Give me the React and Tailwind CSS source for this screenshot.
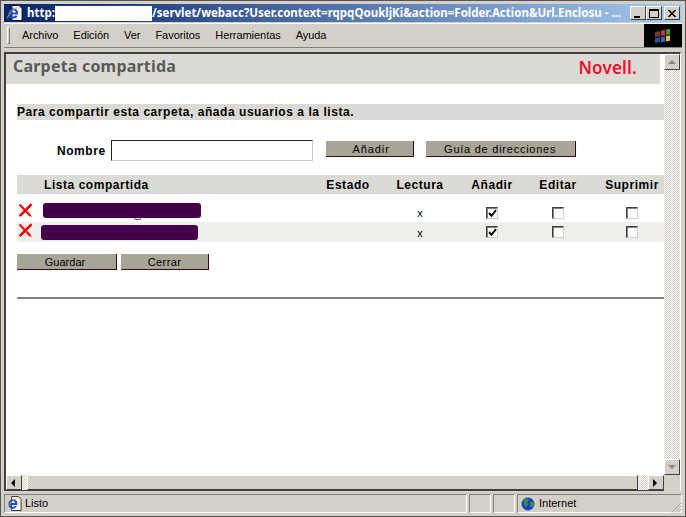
import { Fragment } from 'react';

const COLS = ['Estado', 'Lectura', 'Añadir', 'Editar', 'Suprimir'];
const ROWS = [
  { id: 'a', barClass: 'ml-[26px] mt-[1px] w-[158px]', rowClass: '', cellPad: 'pt-[2px]', mark: true },
  { id: 'b', barClass: 'ml-[24px] mt-[3px] w-[157px]', rowClass: 'bg-[#eeeeea]', cellPad: '', mark: false },
];
const tahoma = "font-['Noto_Sans',sans-serif]";
const arial = "font-['Liberation_Sans',sans-serif]";
const raised = 'border border-t-white border-l-white border-r-[#404040] border-b-[#404040] bg-[#d4d0c8]';
const sunken = 'border border-t-[#808080] border-l-[#808080] border-r-white border-b-white';
const checker = 'bg-[repeating-conic-gradient(#ffffff_0_25%,#d4d0c8_0_50%)] bg-[length:2px_2px]';

function IeIcon({ size = 16 }) {
  return (
    <svg width={size} height={size} viewBox="0 0 16 16" className="shrink-0">
      <path d="M5 0.5h7l3 3v12H5z" fill="#fff" stroke="#000" strokeWidth="0.8" />
      <path d="M2.5 8.5h7.5C10 6 8.6 4.5 6.6 4.5S2.5 6.2 2.5 8.5s1.6 4 4 4c1.4 0 2.6-.6 3.2-1.7" stroke="#1a50d8" strokeWidth="2.2" fill="none" />
      <path d="M0.8 13.5C0 10.5 5 5 10.5 2.5c1.2-.4 1.8.2 1.2 1.2" stroke="#e8b820" strokeWidth="0.9" fill="none" />
    </svg>
  );
}

function WinFlag() {
  return (
    <svg width="18" height="18" viewBox="0 0 18 18">
      <path d="M1 5l5-1v5l-5 1z" fill="#7a3a30" />
      <path d="M1 11l5-1v5l-5 1z" fill="#2f4f8f" />
      <path d="M7 3.5l4-.8v5.5l-4 .8z" fill="#c23a2a" />
      <path d="M12 2.5l4-.8v5.5l-4 .8z" fill="#3f9a3f" />
      <path d="M7 10l4-.8v5.5l-4 .8z" fill="#3a62c8" />
      <path d="M12 9l4-.8v5.5l-4 .8z" fill="#e0c030" />
    </svg>
  );
}

function Globe() {
  return (
    <svg width="14" height="14" viewBox="0 0 14 14" className="shrink-0">
      <circle cx="7" cy="7" r="6.5" fill="#1c3fc4" />
      <path d="M3 2.5l4-1 1 2-2 2 1 2.5-2 2-2-3.5zM9 5l3.5-.5.8 3-2.5 3.5-1.5-2z" fill="#2f9a35" />
    </svg>
  );
}

function WinButton({ children, className = '' }) {
  return (
    <div className={`w-[16px] h-[14px] flex items-center justify-center ${raised} ${className}`}>
      {children}
    </div>
  );
}

function WebButton({ label, className = '' }) {
  return (
    <button className={`h-[16px] pt-[1px] bg-[#a9a498] border-r border-b border-r-[#3a0a0a] border-b-[#3a0a0a] text-[11px] leading-none text-black ${arial} ${className}`}>
      {label}
    </button>
  );
}

function Checkbox({ checked }) {
  return (
    <div className="w-[12px] h-[12px] bg-white border border-t-[#404040] border-l-[#404040] border-r-[#ccc] border-b-[#ccc] shadow-[inset_1px_1px_0_#808080] flex items-center justify-center">
      {checked && (
        <svg width="9" height="9" viewBox="0 0 9 9">
          <path d="M1 4l2.5 2.8L8 1.2" stroke="#000" strokeWidth="1.9" fill="none" />
        </svg>
      )}
    </div>
  );
}

function ScrollArrow({ dir, disabled }) {
  const paths = {
    up: 'M4 1l4 4H0z',
    down: 'M4 5L0 1h8z',
    left: 'M5 0v8L1 4z',
    right: 'M1 0v8l4-4z',
  };
  return (
    <svg width="8" height="8" viewBox="0 0 8 8" className={dir === 'up' || dir === 'down' ? 'mt-[1px]' : ''}>
      <path d={paths[dir]} fill={disabled ? '#888' : '#000'} />
    </svg>
  );
}

export default function App() {
  return (
    <div className={`w-[686px] h-[517px] overflow-hidden bg-[#d4d0c8] border border-[#555] px-[3px] pt-[3px] pb-[3px] flex flex-col ${tahoma}`}>
      {/* title bar */}
      <div className="h-[18px] flex items-center pl-[3px] pr-[2px] bg-gradient-to-r from-[#0a246a] to-[#a6caf0] shrink-0">
        <IeIcon />
        <div className="ml-[4px] flex-1 min-w-0 flex items-center whitespace-nowrap text-white text-[11.5px] font-bold leading-none">
          <span>http:</span>
          <span className="w-[97px] h-[15px] bg-white shrink-0" />
          <span>/servlet/webacc?User.context=rqpqQoukljKi&amp;action=Folder.Action&amp;Url.Enclosu - ...</span>
        </div>
        <div className="flex items-center ml-[4px]">
          <WinButton>
            <div className="w-[6px] h-[2px] bg-black mt-[7px] -ml-[2px]" />
          </WinButton>
          <WinButton>
            <div className="w-[10px] h-[9px] border border-black border-t-2" />
          </WinButton>
          <WinButton className="ml-[2px]">
            <svg width="8" height="7" viewBox="0 0 8 7"><path d="M0.5 0l7 7M7.5 0l-7 7" stroke="#000" strokeWidth="1.5" /></svg>
          </WinButton>
        </div>
      </div>

      {/* menu bar */}
      <div className="h-[25px] mt-[1px] flex items-stretch shrink-0 border-t border-b border-t-white border-b-[#808080]">
        <div className="flex-1 flex items-center pl-[3px]">
          <div className="w-[3px] h-[17px] border border-t-white border-l-white border-r-[#808080] border-b-[#808080]" />
          <nav className={`flex items-center ml-[12px] gap-[15px] text-[11px] tracking-[-0.05px] text-black leading-none pb-[1px] ${arial}`}>
            {['Archivo', 'Edición', 'Ver', 'Favoritos', 'Herramientas', 'Ayuda'].map((item) => (
              <span key={item}>{item}</span>
            ))}
          </nav>
        </div>
        <div className="w-[38px] bg-black flex items-center justify-center">
          <WinFlag />
        </div>
      </div>

      {/* browser frame */}
      <div className="mt-[4px] flex-1 min-h-0 flex flex-col border-t-2 border-l-2 border-t-[#404040] border-l-[#404040] border-r border-r-white mr-[1px]">
        <div className="flex-1 min-h-0 flex">
          {/* page */}
          <main className="flex-1 min-w-0 bg-white overflow-hidden">
            <div className="h-[30px] mr-[4px] bg-[#dcdad5] flex items-start justify-between pl-[7px] pr-[23px]">
              <h1 className="text-[16px] font-bold tracking-[0.2px] text-[#5a5a5a] leading-none mt-[4px]">Carpeta compartida</h1>
              <span className="text-[17px] font-semibold tracking-[0.2px] leading-none text-[#f00e2e] mt-[5px]">Novell.</span>
            </div>

            <div className={`mt-[20px] ml-[11px] h-[16px] bg-[#dcdad5] flex items-center text-[12px] font-bold tracking-[0.55px] text-black leading-none ${arial}`}>
              Para compartir esta carpeta, añada usuarios a la lista.
            </div>

            <div className={`mt-[20px] flex items-center h-[21px] ${arial}`}>
              <label className="ml-[51px] pt-[1px] text-[12px] font-bold tracking-[0.55px] text-black">Nombre</label>
              <input className="ml-[5px] w-[202px] h-[21px] bg-white border border-t-[#222] border-l-[#222] border-r-[#ccc] border-b-[#ccc] outline-none" />
              <WebButton label="Añadir" className="ml-[13px] w-[88px] self-start mt-[1px] pl-[4px] tracking-[0.9px]" />
              <WebButton label="Guía de direcciones" className="ml-[12px] w-[150px] self-start mt-[1px] tracking-[0.75px]" />
            </div>

            <div className={`mt-[14px] ml-[11px] grid grid-cols-[295px_72px_72px_72px_60px_76px] ${arial}`}>
              <div className="h-[19px] bg-[#dcdad5] flex items-center pl-[27px] text-[12px] font-bold tracking-[0.55px] text-black">Lista compartida</div>
              {COLS.map((col) => (
                <div key={col} className={`h-[19px] bg-[#dcdad5] flex items-center justify-center text-[12px] font-bold tracking-[0.55px] text-black ${col === 'Suprimir' ? 'pl-[12px]' : ''}`}>
                  {col}
                </div>
              ))}
              <div className="col-span-6 h-[8px]" />
              {ROWS.map((row) => (
                <Fragment key={row.id}>
                  <div className={`h-[20px] flex items-start relative ${row.rowClass}`}>
                    <svg width="15" height="15" viewBox="0 0 15 15" className="absolute left-[1px] top-[1px]">
                      <path d="M2.5 2.5l11 11M13.5 2.5l-11 11" stroke="#7a0000" strokeWidth="1" />
                      <path d="M1.5 1.5l11 11.5M13.5 1l-12 12" stroke="#ff0000" strokeWidth="2.2" />
                    </svg>
                    <div className={`h-[15px] rounded-[3px] bg-[#45004a] ${row.barClass}`} />
                    {row.mark && <div className="absolute left-[117px] top-[16px] w-[7px] h-[2px] border-b border-x border-[#555] rounded-b-[2px]" />}
                  </div>
                  <div className={`h-[20px] ${row.rowClass}`} />
                  <div className={`h-[20px] flex items-center justify-center text-[11px] text-black pt-[2px] ${row.rowClass}`}>x</div>
                  <div className={`h-[20px] flex items-center justify-center ${row.cellPad} ${row.rowClass}`}><Checkbox checked /></div>
                  <div className={`h-[20px] flex items-center justify-center ${row.cellPad} ${row.rowClass}`}><Checkbox /></div>
                  <div className={`h-[20px] flex items-center justify-center pl-[12px] ${row.cellPad} ${row.rowClass}`}><Checkbox /></div>
                </Fragment>
              ))}
            </div>

            <div className="mt-[12px] ml-[11px] flex gap-[4px]">
              <WebButton label="Guardar" className="w-[100px] pr-[3px]" />
              <WebButton label="Cerrar" className="w-[88px] tracking-[0.4px]" />
            </div>

            <hr className="mt-[27px] ml-[11px] border-0 h-[2px] bg-[#808080]" />
          </main>

          {/* vertical scrollbar */}
          <div className={`w-[16px] flex flex-col justify-between ${checker}`}>
            <div className={`h-[16px] flex items-center justify-center ${raised}`}><ScrollArrow dir="up" disabled /></div>
            <div className={`h-[16px] flex items-center justify-center ${raised}`}><ScrollArrow dir="down" disabled /></div>
          </div>
        </div>

        {/* horizontal scrollbar */}
        <div className="h-[16px] flex shrink-0 border-b border-b-[#404040] mr-[16px]">
          <div className={`w-[16px] flex items-center justify-center ${raised}`}><ScrollArrow dir="left" /></div>
          <div className={`w-[5px] ${checker}`} />
          <div className={`flex-1 ${raised}`} />
          <div className={`w-[10px] ${checker}`} />
          <div className={`w-[16px] flex items-center justify-center ${raised}`}><ScrollArrow dir="right" /></div>
        </div>
      </div>

      {/* status bar */}
      <div className={`h-[19px] mt-[3px] flex items-stretch shrink-0 text-[11px] text-black leading-none relative ${arial}`}>
        <div className={`flex-1 flex items-center pl-[2px] gap-[3px] ${sunken}`}>
          <IeIcon size={15} />
          <span>Listo</span>
        </div>
        <div className={`w-[22px] ml-[2px] ${sunken}`} />
        <div className={`w-[22px] ml-[2px] ${sunken}`} />
        <div className={`w-[165px] ml-[2px] flex items-center pl-[3px] gap-[4px] ${sunken}`}>
          <Globe />
          <span>Internet</span>
        </div>
        <svg width="11" height="11" viewBox="0 0 11 11" className="absolute right-0 bottom-0">
          <path d="M10.5 1L1 10.5M10.5 4L4 10.5M10.5 7L7 10.5" stroke="#808080" strokeWidth="1" />
          <path d="M10.5 2L2 10.5M10.5 5L5 10.5M10.5 8L8 10.5" stroke="#fff" strokeWidth="1" />
        </svg>
      </div>
    </div>
  );
}
